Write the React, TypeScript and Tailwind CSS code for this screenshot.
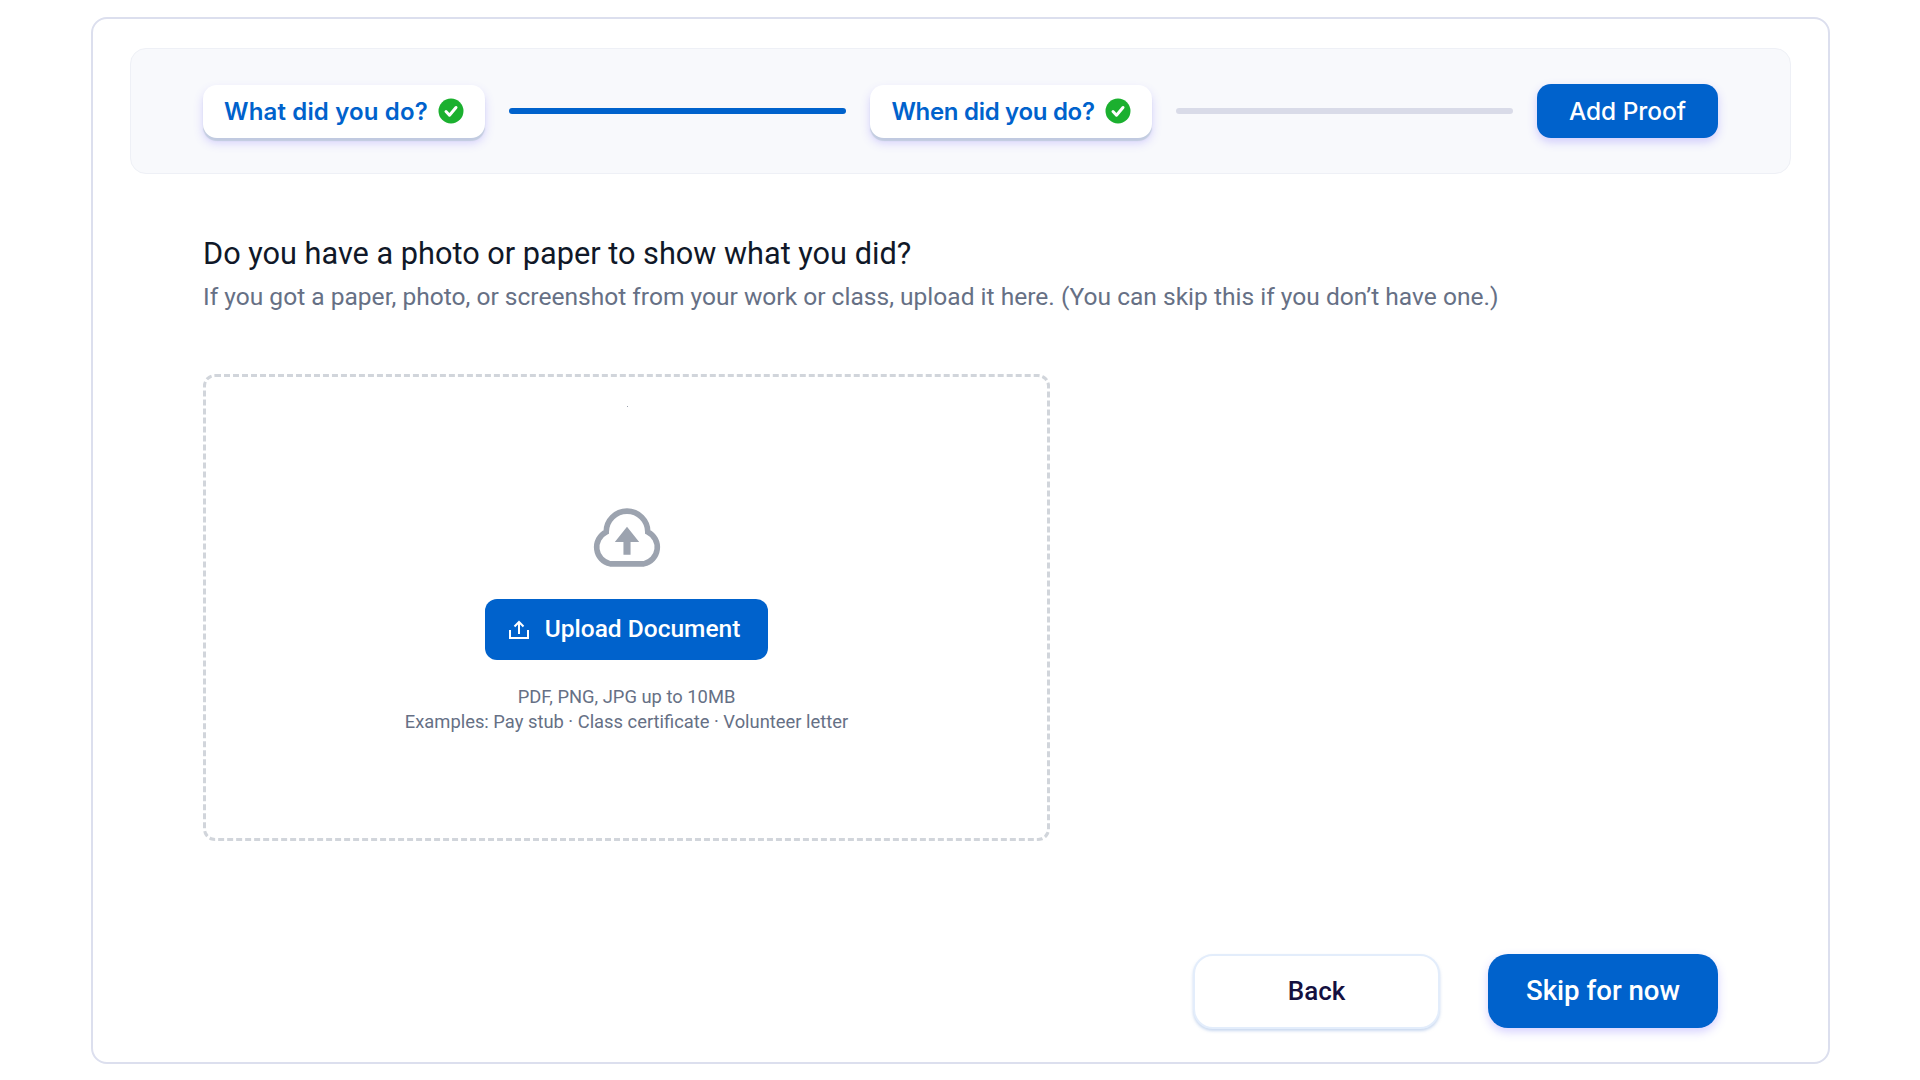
import React from "react";

function Check() {
  return (
    <svg width="26" height="26" viewBox="0 0 26 26" className="shrink-0">
      <circle cx="13" cy="13" r="12.5" fill="#1bb02f" />
      <path d="M8 13.500l3.500 3.700 6.500-7.700" fill="none" stroke="#fff" strokeWidth="3" strokeLinecap="round" strokeLinejoin="round" />
    </svg>
  );
}

function Pill({ label, cls }: { label: string; cls: string }) {
  return (
    <div className="flex h-[53px] w-[282px] shrink-0 items-center justify-center gap-[10px] rounded-[14px] bg-white font-['Inter',sans-serif] text-[24px] font-semibold text-[#0062cc] shadow-[0_3px_1px_rgba(170,190,200,0.55),0_5px_10px_rgba(110,90,255,0.25)]">
      <span className={`pt-[1px] ${cls}`}>{label}</span>
      <Check />
    </div>
  );
}

export default function App() {
  return (
    <div className="min-h-screen bg-white pl-[91px] pr-[90px] pt-[17px] font-['Roboto',sans-serif]">
      <div className="h-[1047px] rounded-[16px] border-2 border-[#dcdfee] bg-white px-[37px] pt-[29px]">
        <div className="flex h-[126px] items-center gap-[24px] rounded-[16px] border border-[#eef0f6] bg-[#f8f9fc] pl-[72px] pr-[72px]">
          <Pill label="What did you do?" cls="tracking-[0.15px]" />
          <div className="h-[6px] flex-1 rounded-full bg-[#0062cc]" />
          <Pill label="When did you do?" cls="tracking-[-0.3px]" />
          <div className="h-[6px] flex-1 rounded-full bg-[#d9dbe8]" />
          <div className="flex h-[54px] w-[181px] shrink-0 items-center justify-center rounded-[14px] bg-[#0062cc] pt-[1px] font-['Inter',sans-serif] text-[24.4px] font-medium text-white shadow-[0_4px_10px_rgba(90,70,255,0.25)]">
            Add Proof
          </div>
        </div>

        <div className="pl-[73px] pr-[72px]">
          <h1 className="mt-[59px] text-[30.7px] font-normal leading-[41px] text-[#101828]">
            Do you have a photo or paper to show what you did?
          </h1>
          <p className="mt-[3px] text-[24.55px] leading-[40px] text-[#667085]">
            If you got a paper, photo, or screenshot from your work or class, upload it here. (You can skip this if you don’t have one.)
          </p>

          <div className="relative mt-[57px] flex h-[467px] w-[847px] flex-col items-center justify-center rounded-[12px] border-[3px] border-dashed border-[#d1d5db] pt-[26px]">
            <div className="absolute left-1/2 top-[29px] h-[1px] w-[1px] bg-[#9ca3af]" />
            <svg width="68" height="59" viewBox="0 0 67 58" className="mb-[32px]">
              <path
                d="M17 55H50A16.800 16.800 0 0 0 54 23.500A20.500 20.500 0 0 0 13 23.500A16.800 16.800 0 0 0 17 55Z"
                fill="none"
                stroke="#9ca3af"
                strokeWidth="5.500"
              />
              <path d="M33.500 18.500L45.500 33.500H37V46H30V33.500H21.500Z" fill="#9ca3af" />
            </svg>
            <div className="flex h-[61px] w-[283px] items-center justify-center gap-[16px] rounded-[12px] bg-[#0062cc] pr-[4px] text-[24.5px] font-medium text-white">
              <svg width="20" height="19" viewBox="0 0 20 19" fill="none" stroke="#fff" strokeWidth="2">
                <path d="M1 10V18H19V10" />
                <path d="M10 14V2" />
                <path d="M5.500 6.500L10 2l4.500 4.500" />
              </svg>
              <span>Upload Document</span>
            </div>
            <p className="mt-[24px] text-center text-[18.35px] leading-[25px] text-[#667085]">
              PDF, PNG, JPG up to 10MB
              <br />
              Examples: Pay stub · Class certificate · Volunteer letter
            </p>
          </div>
        </div>

        <div className="mt-[113px] flex justify-end gap-[48px] pr-[73px]">
          <div className="flex h-[75px] w-[247px] items-center justify-center rounded-[20px] border-2 border-[#e3edfb] bg-white text-[26px] font-medium text-[#14103f] shadow-[0_2px_3px_rgba(150,180,225,0.5)]">
            Back
          </div>
          <div className="flex h-[74px] w-[230px] items-center justify-center rounded-[20px] bg-[#0062cc] text-[27.6px] font-medium text-white shadow-[0_4px_10px_rgba(90,70,255,0.25)]">
            Skip for now
          </div>
        </div>
      </div>
    </div>
  );
}
